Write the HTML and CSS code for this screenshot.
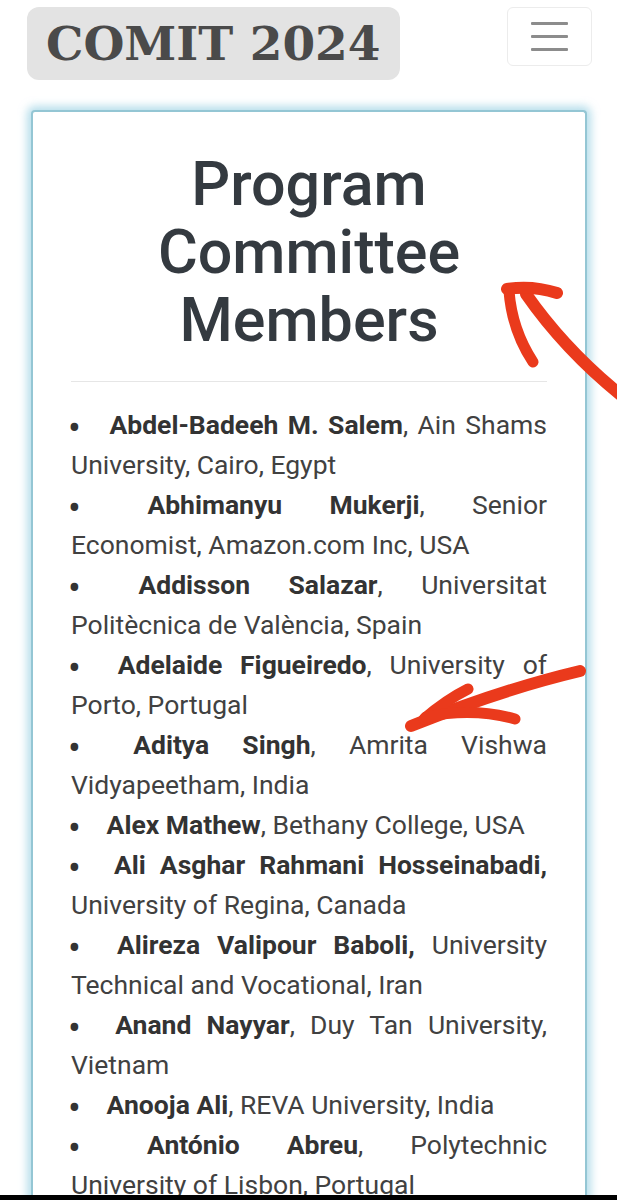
FILE: index.html
```html
<!DOCTYPE html>
<html lang="en">
<head>
<meta charset="utf-8">
<title>COMIT 2024 - Program Committee Members</title>
<link rel="stylesheet" href="styles.css">
</head>
<body>
<header class="topbar">
  <a class="brand" href="#">COMIT 2024</a>
  <button class="toggler" type="button" aria-label="Toggle navigation">
    <span class="bar"></span><span class="bar"></span><span class="bar"></span>
  </button>
</header>

<main class="card">
  <h1 class="title">Program Committee Members</h1>
  <hr class="rule">
  <ul class="members">
    <li><span class="dot">•</span> <b>Abdel-Badeeh M. Salem</b>, Ain Shams University, Cairo, Egypt</li>
    <li><span class="dot">•</span> <b>Abhimanyu Mukerji</b>, Senior Economist, Amazon.com Inc, USA</li>
    <li><span class="dot">•</span> <b>Addisson Salazar</b>, Universitat Politècnica de València, Spain</li>
    <li><span class="dot">•</span> <b>Adelaide Figueiredo</b>, University of Porto, Portugal</li>
    <li><span class="dot">•</span> <b>Aditya Singh</b>, Amrita Vishwa Vidyapeetham, India</li>
    <li><span class="dot">•</span> <b>Alex Mathew</b>, Bethany College, USA</li>
    <li><span class="dot">•</span> <b>Ali Asghar Rahmani Hosseinabadi,</b> University of Regina, Canada</li>
    <li><span class="dot">•</span> <b>Alireza Valipour Baboli,</b> University Technical and Vocational, Iran</li>
    <li><span class="dot">•</span> <b>Anand Nayyar</b>, Duy Tan University, Vietnam</li>
    <li><span class="dot">•</span> <b>Anooja Ali</b>, REVA University, India</li>
    <li><span class="dot">•</span> <b>António Abreu</b>, Polytechnic University of Lisbon, Portugal</li>
  </ul>
</main>

<svg class="marks" width="617" height="1200" viewBox="0 0 617 1200" aria-hidden="true">
  <g fill="none" stroke="#ea3a1c" stroke-linecap="round" stroke-linejoin="round">
    <path d="M622 396 Q 565 350 526 294" stroke-width="12"/>
    <path d="M507 289 Q 532 285 557 293" stroke-width="12"/>
    <path d="M509 291 Q 512 330 533 362" stroke-width="11"/>
    <path d="M580 671 Q 500 690 411 726" stroke-width="12"/>
    <path d="M424 719 Q 446 700 468 689" stroke-width="11"/>
    <path d="M426 717 Q 472 707 515 719" stroke-width="11"/>
  </g>
</svg>
<div class="edge"></div>
</body>
</html>
```
FILE: styles.css
```css
html, body {
  margin: 0;
  padding: 0;
  background: #ffffff;
}

body {
  font-family: Roboto, "Noto Sans", "Liberation Sans", sans-serif;
  color: #444444;
  overflow: hidden;
  height: 1200px;
  position: relative;
}

.topbar {
  display: flex;
  justify-content: space-between;
  align-items: flex-start;
  padding: 7px 25px 0 27px;
}

.brand {
  display: block;
  background: #e3e3e3;
  border-radius: 12px;
  height: 73px;
  line-height: 73px;
  padding: 0 19px;
  font-family: "DejaVu Serif", "Liberation Serif", serif;
  font-weight: bold;
  font-size: 47px;
  color: #4a4a4a;
  text-decoration: none;
  white-space: nowrap;
}

.toggler {
  width: 85px;
  height: 59px;
  margin: 0;
  padding: 0;
  background: #ffffff;
  border: 1px solid #ececec;
  border-radius: 6px;
  display: flex;
  flex-direction: column;
  align-items: center;
  justify-content: center;
  gap: 10px;
}

.bar {
  display: block;
  width: 37px;
  height: 3px;
  background: #8c8c8c;
  border-radius: 1px;
}

.card {
  margin: 30px 30px 0 31px;
  border: 2px solid #94c6d4;
  border-bottom: none;
  border-radius: 4px 4px 0 0;
  box-shadow: 0 0 8px 4px rgba(135, 200, 222, 0.6);
  padding: 38px 38px 0 38px;
  min-height: 1200px;
  background: #ffffff;
}

.title {
  margin: 0;
  text-align: center;
  font-family: Roboto, "Noto Sans", sans-serif;
  font-weight: 500;
  font-size: 61px;
  line-height: 68px;
  color: #343a40;
}

.rule {
  border: none;
  border-top: 1px solid #e6e6e6;
  margin: 27px 0 23px 0;
}

.members {
  list-style: none;
  margin: 0;
  padding: 0;
}

.members li {
  font-size: 26.5px;
  line-height: 40px;
  text-align: justify;
  color: #414141;
}

.members b {
  font-weight: 700;
  color: #333333;
}

.dot {
  display: inline-block;
  width: 29px;
  text-indent: -3px;
  font-size: 38px;
  line-height: 0;
  vertical-align: -7px;
  color: #333333;
}

.marks {
  position: absolute;
  left: 0;
  top: 0;
  pointer-events: none;
}

.edge {
  position: fixed;
  left: 0;
  right: 0;
  bottom: 0;
  height: 5px;
  background: #000000;
}
```
